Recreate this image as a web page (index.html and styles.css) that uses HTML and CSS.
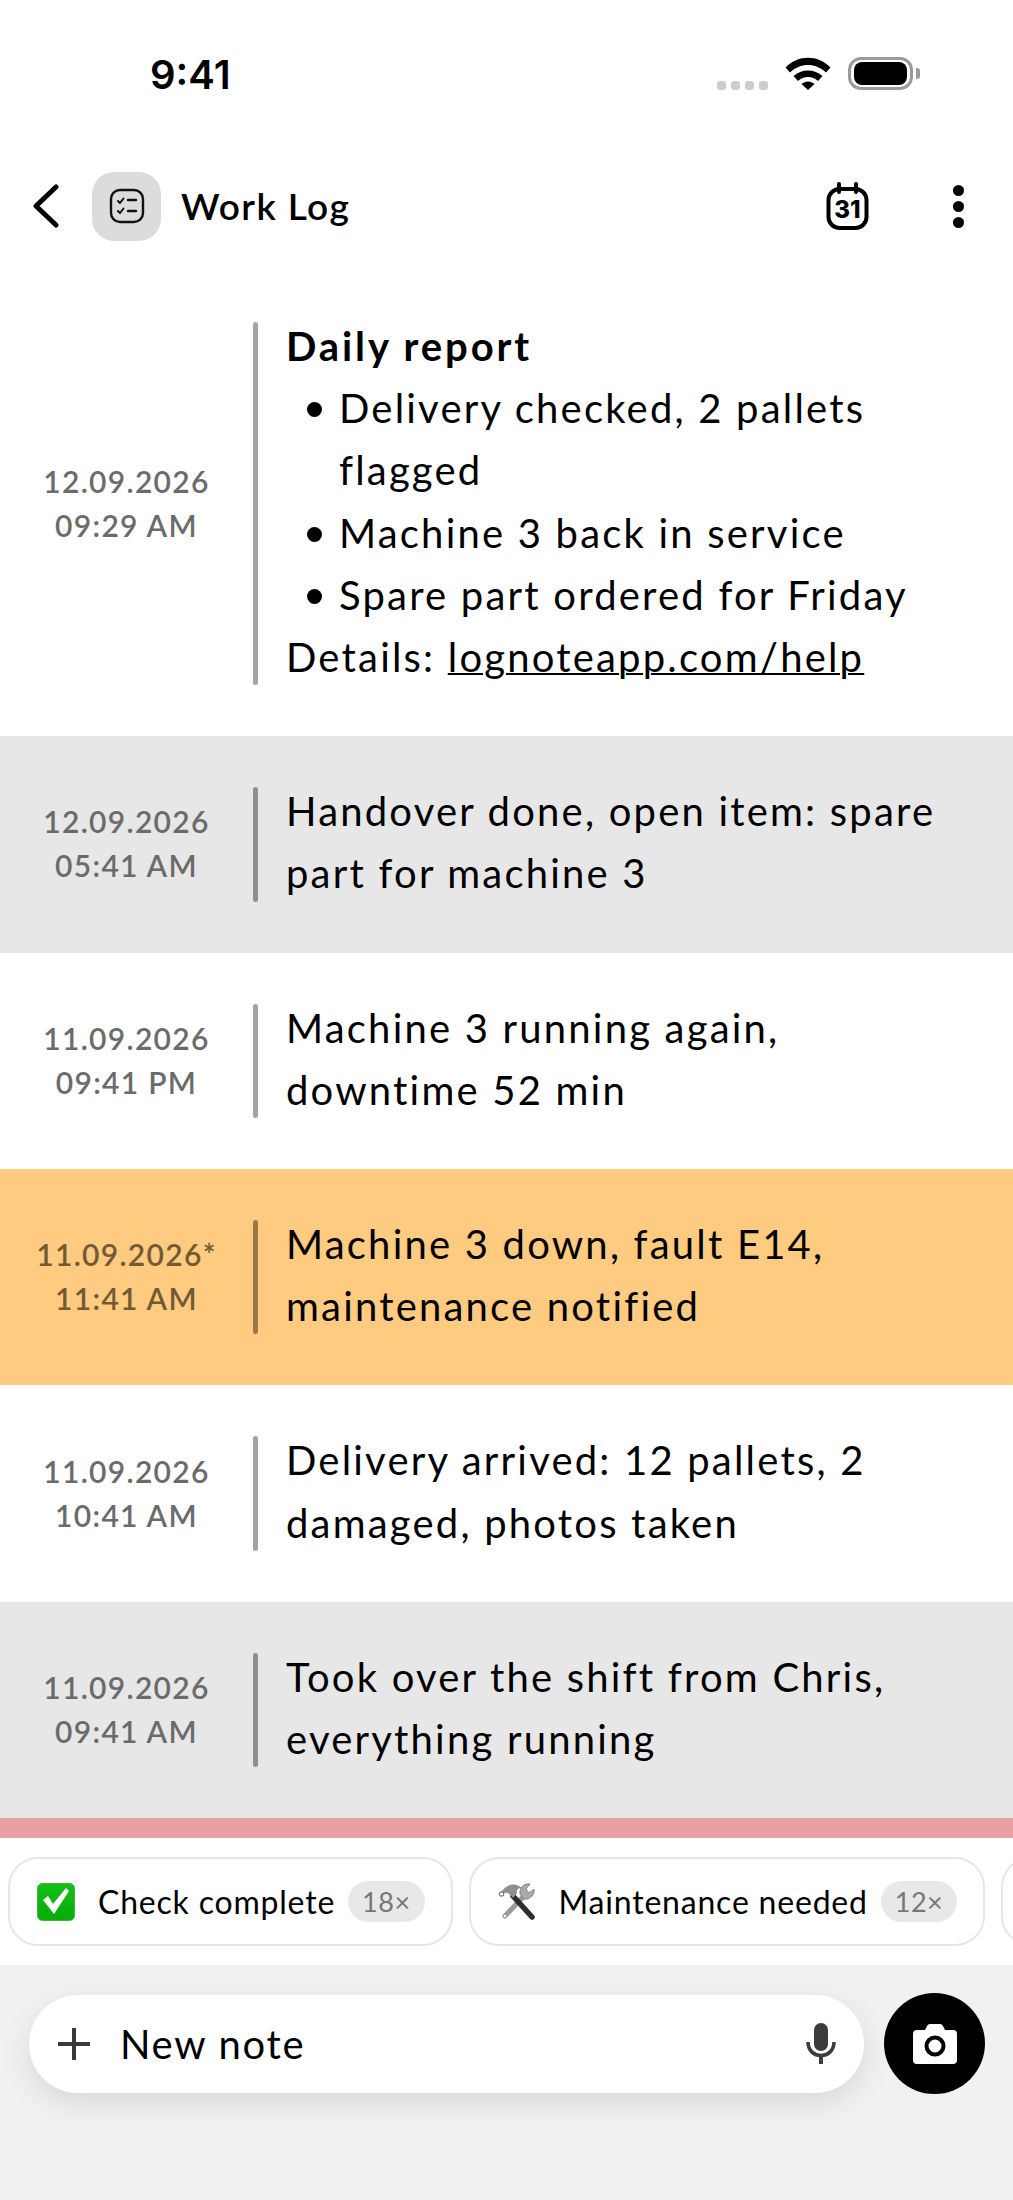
FILE: index.html
```html
<!DOCTYPE html>
<html lang="en">
<head>
  <meta charset="UTF-8">
  <title>Work Log</title>
  <link rel="stylesheet" href="styles.css">
</head>
<body>
  <div class="screen">

    <!-- Status bar -->
    <div class="status-bar">
      <div class="clock">9:41</div>
      <div class="status-icons">
        <div class="signal"><span></span><span></span><span></span><span></span></div>
        <svg class="wifi" width="46" height="33" viewBox="0 0 46 33">
          <path d="M0.5 10.5 C13 -2.5 33 -2.5 45.5 10.5 L41 15.5 C31 5.5 15 5.5 5 15.5 Z" fill="#000"/>
          <path d="M8.5 19 C16 11.5 30 11.5 37.5 19 L33 24 C27.5 18.5 18.5 18.5 13 24 Z" fill="#000"/>
          <path d="M16.5 27 C20 23.5 26 23.5 29.5 27 L23 33 Z" fill="#000"/>
        </svg>
        <div class="battery"><div class="battery-fill"></div></div>
        <div class="battery-nub"></div>
      </div>
    </div>

    <!-- Header -->
    <div class="header">
      <svg class="back" width="26" height="44" viewBox="0 0 26 44">
        <path d="M23 3 L3 22 L23 41" fill="none" stroke="#000" stroke-width="5" stroke-linecap="round" stroke-linejoin="round"/>
      </svg>
      <div class="log-icon">
        <svg width="36" height="36" viewBox="0 0 36 36" fill="none" stroke="#111" stroke-linecap="round" stroke-linejoin="round">
          <rect x="2" y="2" width="32" height="32" rx="9" stroke-width="2.4"/>
          <path d="M9 13 L11 15 L14.5 10.5 M9 23 L11 25 L14.5 20.5" stroke-width="2"/>
          <path d="M19 12 H27 M19 23 H27" stroke-width="2.4"/>
        </svg>
      </div>
      <div class="title">Work Log</div>
      <svg class="calendar" width="44" height="48" viewBox="0 0 44 48">
        <rect x="2.5" y="7" width="38" height="39" rx="11" fill="none" stroke="#000" stroke-width="4"/>
        <path d="M13 2 V10 M30 2 V10" stroke="#000" stroke-width="4" stroke-linecap="round"/>
        <text class="calendar-day" x="21.5" y="36" text-anchor="middle">31</text>
      </svg>
      <div class="menu"><span></span><span></span><span></span></div>
    </div>

    <!-- Log entries -->
    <div class="entries">
      <div class="entry">
        <div class="stamp">12.09.2026<br>09:29 AM</div>
        <div class="rule"></div>
        <div class="note">
          <div class="note-title">Daily report</div>
          <div class="bullet">Delivery checked, 2 pallets flagged</div>
          <div class="bullet">Machine 3 back in service</div>
          <div class="bullet">Spare part ordered for Friday</div>
          <div>Details: <span class="link">lognoteapp.com/help</span></div>
        </div>
      </div>

      <div class="entry shaded">
        <div class="stamp">12.09.2026<br>05:41 AM</div>
        <div class="rule"></div>
        <div class="note">Handover done, open item: spare part for machine 3</div>
      </div>

      <div class="entry">
        <div class="stamp">11.09.2026<br>09:41 PM</div>
        <div class="rule"></div>
        <div class="note">Machine 3 running again, downtime 52 min</div>
      </div>

      <div class="entry flagged">
        <div class="stamp">11.09.2026*<br>11:41 AM</div>
        <div class="rule"></div>
        <div class="note">Machine 3 down, fault E14, maintenance notified</div>
      </div>

      <div class="entry">
        <div class="stamp">11.09.2026<br>10:41 AM</div>
        <div class="rule"></div>
        <div class="note">Delivery arrived: 12 pallets, 2 damaged, photos taken</div>
      </div>

      <div class="entry shaded">
        <div class="stamp">11.09.2026<br>09:41 AM</div>
        <div class="rule"></div>
        <div class="note">Took over the shift from Chris, everything running</div>
      </div>
    </div>

    <div class="alert-strip"></div>

    <!-- Quick notes -->
    <div class="chips">
      <div class="chip">
        <svg class="chip-icon" width="38" height="38" viewBox="0 0 38 38">
          <defs>
            <linearGradient id="checkGreen" x1="0" y1="0" x2="0" y2="1">
              <stop offset="0" stop-color="#16c016"/>
              <stop offset="1" stop-color="#07ac07"/>
            </linearGradient>
          </defs>
          <rect x="0.5" y="0.5" width="37" height="37" rx="5" fill="url(#checkGreen)" stroke="#45b045"/>
          <path d="M6 17 L11 13 L16 21 L29 5 L32 8 L17 31 Z" fill="#fff"/>
        </svg>
        <span class="chip-text">Check complete</span>
        <span class="chip-count">18×</span>
      </div>
      <div class="chip">
        <svg class="chip-icon" width="38" height="38" viewBox="0 0 38 38">
          <path d="M7 33 L26 13" stroke="#9a9a9e" stroke-width="5" stroke-linecap="round"/>
          <circle cx="7" cy="33" r="1.2" fill="#fff"/>
          <path d="M22 11 C21 5 26 0 32 1 L28 6 L31 10 L36 6 C37 12 32 17 26 16 Z" fill="#a9a9ae" stroke="#77777b" stroke-width="0.8"/>
          <path d="M15 13 L34 34" stroke="#2d2d2d" stroke-width="5.5" stroke-linecap="round"/>
          <path d="M2 11 C8 0 18 -1 25 6 C21 4 18 6 19 10 L15 15 L10 10 C7 9 5 10 4 13 Z" fill="#8e8e93"/>
          <circle cx="3.5" cy="11" r="2.2" fill="#fff" stroke="#77777b" stroke-width="1.2"/>
        </svg>
        <span class="chip-text">Maintenance needed</span>
        <span class="chip-count">12×</span>
      </div>
      <div class="chip chip-cut"></div>
    </div>

    <!-- Composer -->
    <div class="composer">
      <div class="input">
        <svg width="34" height="34" viewBox="0 0 34 34">
          <path d="M17 1 V33 M1 17 H33" stroke="#3a3a3a" stroke-width="4"/>
        </svg>
        <div class="placeholder">New note</div>
        <svg class="mic" width="30" height="42" viewBox="0 0 30 42">
          <rect x="8" y="0" width="14" height="28" rx="7" fill="#3c3c3c"/>
          <path d="M2 19 C2 37 28 37 28 19" fill="none" stroke="#3c3c3c" stroke-width="3.6"/>
          <path d="M15 32 V41" stroke="#3c3c3c" stroke-width="4"/>
        </svg>
      </div>
      <div class="camera">
        <svg width="44" height="40" viewBox="0 0 44 40">
          <path d="M4 6 H12 L14 2 Q15 0 17 0 H27 Q29 0 30 2 L32 6 H40 Q44 6 44 10 V36 Q44 40 40 40 H4 Q0 40 0 36 V10 Q0 6 4 6 Z" fill="#fff"/>
          <circle cx="22" cy="22" r="8.5" fill="#fff" stroke="#000" stroke-width="4"/>
        </svg>
      </div>
    </div>

  </div>
</body>
</html>
```

FILE: styles.css
```css
body {
  margin: 0;
  font-family: "Lato", "Open Sans", sans-serif;
  background-color: #fff;
  color: #000;
}

.screen {
  display: flex;
  flex-direction: column;
  height: 2200px;
  overflow: hidden;
}

/* Status bar */
.status-bar {
  height: 140px;
  flex: none;
  display: flex;
  justify-content: space-between;
  padding: 51px 93px 0 150px;
  box-sizing: border-box;
}

.clock {
  font-family: "Inter", sans-serif;
  font-size: 40px;
  font-weight: 600;
  line-height: 48px;
}

.status-icons {
  display: flex;
  align-items: flex-start;
  padding-top: 6px;
}

.signal {
  display: flex;
  gap: 5px;
  margin-top: 24px;
  margin-right: 17px;
}

.signal span {
  width: 9px;
  height: 9px;
  border-radius: 3px;
  background-color: #cdcdcd;
}

.wifi {
  margin-right: 17px;
}

.battery {
  width: 65px;
  height: 33px;
  box-sizing: border-box;
  border: 3px solid #9a9a9a;
  border-radius: 13px;
  padding: 2px 3px;
}

.battery-fill {
  height: 100%;
  background-color: #000;
  border-radius: 8px;
}

.battery-nub {
  width: 4px;
  height: 11px;
  margin-top: 11px;
  margin-left: 3px;
  background-color: #9a9a9a;
  border-radius: 0 3px 3px 0;
}

/* Header */
.header {
  height: 131px;
  flex: none;
  display: flex;
  align-items: center;
  padding: 1px 49px 0 33px;
  box-sizing: border-box;
}

.log-icon {
  width: 69px;
  height: 69px;
  margin-left: 33px;
  background-color: #dcdcdc;
  border-radius: 22px;
  display: flex;
  align-items: center;
  justify-content: center;
}

.title {
  flex: 1;
  margin: 0 0 2px 20px;
  font-size: 37px;
  font-weight: 600;
  letter-spacing: 1.4px;
}

.calendar-day {
  font-family: "Inter", sans-serif;
  font-size: 24px;
  font-weight: 800;
}

.menu {
  display: flex;
  flex-direction: column;
  gap: 5px;
  margin-left: 83px;
}

.menu span {
  width: 11px;
  height: 11px;
  border-radius: 50%;
  background-color: #000;
}

/* Entries */
.entry {
  display: flex;
  padding: 46px 60px 46px 0;
}

.shaded {
  background-color: #e7e7e7;
}

.flagged {
  background-color: #fecb80;
}

.stamp {
  width: 253px;
  flex: none;
  align-self: center;
  margin-top: -2px;
  text-align: center;
  color: #6b6b6b;
  font-size: 30px;
  font-weight: 600;
  line-height: 44px;
  letter-spacing: 1.3px;
}

.flagged .stamp {
  color: #725b34;
}

.rule {
  width: 5px;
  flex: none;
  margin: 5px 0;
  border-radius: 3px;
  background-color: #a3a3a3;
}

.shaded .rule {
  background-color: #8f8f8f;
}

.flagged .rule {
  background-color: #97794a;
}

.note {
  margin: -2px 0 2px 28px;
  font-size: 40px;
  line-height: 62.2px;
  letter-spacing: 2.2px;
}

.note-title {
  font-weight: 700;
  letter-spacing: 2.9px;
}

.bullet {
  position: relative;
  padding-left: 53px;
}

.bullet::before {
  content: "";
  position: absolute;
  left: 21px;
  top: 25px;
  width: 15px;
  height: 15px;
  border-radius: 50%;
  background-color: #000;
}

.link {
  text-decoration: underline;
  text-decoration-thickness: 2px;
}

.alert-strip {
  height: 20px;
  flex: none;
  background-color: #e9a0a3;
}

/* Quick notes */
.chips {
  height: 127px;
  flex: none;
  display: flex;
  align-items: center;
  gap: 16px;
  padding-left: 8px;
  overflow: hidden;
  box-sizing: border-box;
}

.chip {
  height: 89px;
  flex: none;
  display: flex;
  align-items: center;
  box-sizing: border-box;
  padding: 0 26px 0 27px;
  border: 2px solid #e6e6e6;
  border-radius: 30px;
}

.chip-cut {
  width: 200px;
}

.chip-text {
  margin-left: 23px;
  font-size: 32px;
  letter-spacing: 0.8px;
}

.chip-count {
  margin-left: 13px;
  padding: 0 14px;
  height: 41px;
  line-height: 41px;
  border-radius: 21px;
  background-color: #e8e8e8;
  color: #777;
  font-size: 27px;
  letter-spacing: 0.5px;
}

/* Composer */
.composer {
  flex: 1;
  display: flex;
  align-items: flex-start;
  gap: 20px;
  padding: 28px 28px 0 29px;
  background-color: #f1f1f1;
}

.input {
  flex: 1;
  height: 98px;
  margin-top: 2px;
  display: flex;
  align-items: center;
  padding: 0 28px;
  background-color: #fff;
  border-radius: 49px;
  box-shadow: 0 10px 30px rgba(0, 0, 0, 0.1);
}

.placeholder {
  flex: 1;
  margin-left: 29px;
  font-size: 40px;
  letter-spacing: 1.7px;
}

.camera {
  width: 101px;
  height: 101px;
  flex: none;
  background-color: #000;
  border-radius: 50%;
  display: flex;
  align-items: center;
  justify-content: center;
}
```
